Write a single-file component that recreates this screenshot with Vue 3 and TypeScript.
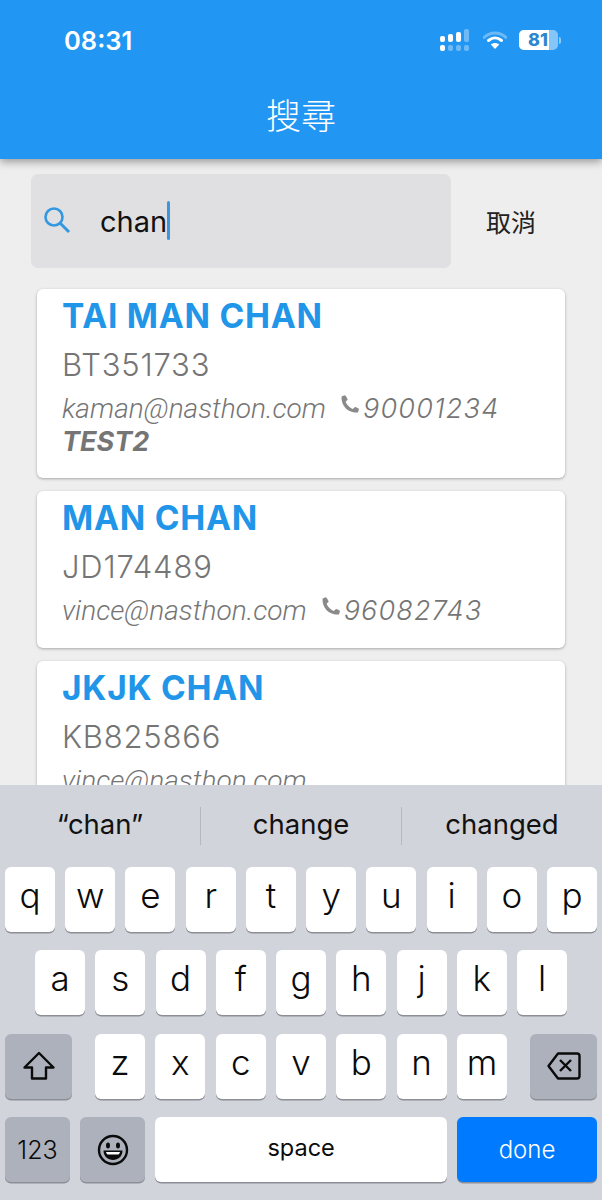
<script setup lang="ts">
interface Person { name: string; id: string; email: string; phone?: string; note?: string }
const people: Person[] = [
  { name: 'TAI MAN CHAN', id: 'BT351733', email: 'kaman@nasthon.com', phone: '90001234', note: 'TEST2' },
  { name: 'MAN CHAN', id: 'JD174489', email: 'vince@nasthon.com', phone: '96082743' },
  { name: 'JKJK CHAN', id: 'KB825866', email: 'vince@nasthon.com' }
]
const row1 = 'qwertyuiop'.split('')
const row2 = 'asdfghjkl'.split('')
const row3 = 'zxcvbnm'.split('')
</script>

<template>
  <div class="page">
    <header class="header">
      <div class="status">
        <span class="time">08:31</span>
        <div class="status-icons">
          <svg width="30" height="22" viewBox="0 0 30 22" class="signal">
            <rect x="0" y="7" width="5" height="6" rx="2" fill="#fff" />
            <rect x="8" y="5" width="5" height="8" rx="2" fill="#fff" />
            <rect x="16" y="3" width="5" height="10" rx="2" fill="#fff" />
            <rect x="24" y="0" width="5" height="13" rx="2" fill="#fff" opacity=".35" />
            <rect x="0" y="16" width="5" height="6" rx="2" fill="#fff" />
            <rect x="8" y="16" width="5" height="6" rx="2" fill="#fff" opacity=".35" />
            <rect x="16" y="16" width="5" height="6" rx="2" fill="#fff" opacity=".35" />
            <rect x="24" y="16" width="5" height="6" rx="2" fill="#fff" opacity=".35" />
          </svg>
          <svg width="24" height="20" viewBox="0 0 24 20" class="wifi">
            <path d="M1 7.5C7.5 1.5 16.5 1.5 23 7.5" fill="none" stroke="#fff" stroke-width="3" opacity=".35" stroke-linecap="round" />
            <path d="M5.5 10.5C9.500 7 14.500 7 18.500 10.500" fill="none" stroke="#fff" stroke-width="3" stroke-linecap="round" />
            <path d="M12 19L7.800 14.400C10.200 12.400 13.800 12.400 16.200 14.400Z" fill="#fff" />
          </svg>
          <div class="battery">
            <div class="battery-body"><span class="battery-fill"><b class="battery-num">81</b></span></div>
            <i class="battery-cap"></i>
          </div>
        </div>
      </div>
      <h1 class="title">搜尋</h1>
    </header>

    <main class="content">
      <div class="search-row">
        <div class="search-box">
          <svg class="search-icon" width="28" height="28" viewBox="0 0 28 28">
            <circle cx="11" cy="11" r="8.500" fill="none" stroke="#3498e0" stroke-width="2.600" />
            <path d="M17 17L26 26" stroke="#3498e0" stroke-width="3" fill="none" />
          </svg>
          <span class="query">chan</span><i class="caret"></i>
        </div>
        <span class="cancel">取消</span>
      </div>

      <div class="list">
        <article v-for="p in people" :key="p.id" class="card">
          <div class="name">{{ p.name }}</div>
          <div class="pid">{{ p.id }}</div>
          <div class="contact">
            <span class="email">{{ p.email }}</span>
            <template v-if="p.phone">
              <svg class="phone" width="20" height="20" viewBox="0 0 20 20">
                <path d="M4.600 1.200L1.600 2.600C1.200 7 2.600 11 5.600 14.200C8.600 17.200 12.600 18.600 18 18.600L19 15C19 14.600 15.800 13 15 13L12.800 15C10 14 6.600 10.600 5.600 7.800L7.600 5.800C7.800 5 6 1.600 4.600 1.200Z" fill="#8a8a8a" />
              </svg>
              <span class="tel">{{ p.phone }}</span>
            </template>
          </div>
          <div v-if="p.note" class="note">{{ p.note }}</div>
        </article>
      </div>
    </main>

    <footer class="keyboard">
      <div class="suggest">
        <span class="sg">“chan”</span><i class="sg-sep"></i>
        <span class="sg">change</span><i class="sg-sep"></i>
        <span class="sg">changed</span>
      </div>
      <div class="keys">
        <div class="kb-row">
          <span v-for="k in row1" :key="k" class="key letter">{{ k }}</span>
        </div>
        <div class="kb-row inset">
          <span v-for="k in row2" :key="k" class="key letter">{{ k }}</span>
        </div>
        <div class="kb-row">
          <span class="key fn wide">
            <svg width="34" height="30" viewBox="0 0 34 30">
              <path d="M17 2L31.500 16.500H24V27.500H10V16.500H2.500Z" fill="none" stroke="#0b0b0b" stroke-width="2.400" stroke-linejoin="round" />
            </svg>
          </span>
          <div class="mid">
            <span v-for="k in row3" :key="k" class="key letter">{{ k }}</span>
          </div>
          <span class="key fn wide">
            <svg width="34" height="30" viewBox="0 0 34 30">
              <path d="M11 2.500H30C31.400 2.500 32.500 3.600 32.500 5V25C32.500 26.400 31.400 27.500 30 27.500H11L1.500 15Z" fill="none" stroke="#0b0b0b" stroke-width="2.400" stroke-linejoin="round" />
              <path d="M13 9L24 20M24 9L13 20" fill="none" stroke="#0b0b0b" stroke-width="2.400" />
            </svg>
          </span>
        </div>
        <div class="kb-row bottom">
          <span class="key fn num">123</span>
          <span class="key fn emoji">
            <svg width="32" height="32" viewBox="0 0 32 32">
              <circle cx="16" cy="16" r="14" fill="none" stroke="#0b0b0b" stroke-width="2.400" />
              <ellipse cx="11" cy="11.500" rx="2" ry="3" fill="#0b0b0b" />
              <ellipse cx="21" cy="11.500" rx="2" ry="3" fill="#0b0b0b" />
              <path d="M6.500 16.500H25.500C25.500 22.500 21 26 16 26C11 26 6.500 22.500 6.500 16.500Z" fill="#0b0b0b" />
              <path d="M9 18H23C22.500 19.500 22 20 21.500 20.500H10.500C10 20 9.500 19.500 9 18Z" fill="#fff" />
            </svg>
          </span>
          <span class="key letter space">space</span>
          <span class="key done">done</span>
        </div>
      </div>
    </footer>
  </div>
</template>

<style>
html, body { margin: 0; padding: 0; background: #eeeeee; }
</style>

<style scoped>
.page {
  width: 602px;
  height: 1200px;
  display: flex;
  flex-direction: column;
  overflow: hidden;
  background: #eeeeee;
  font-family: Inter, "Noto Sans CJK TC", sans-serif;
}
.header {
  height: 159px;
  flex: none;
  background: #2196f3;
  box-shadow: 0 3px 8px rgba(0, 0, 0, .35);
  position: relative;
  z-index: 2;
  color: #fff;
  box-sizing: border-box;
  padding-top: 24px;
}
.status {
  height: 32px;
  display: flex;
  justify-content: space-between;
  align-items: center;
  padding: 0 41px 0 64px;
}
.time {
  font-size: 25.500px;
  font-weight: 600;
}
.status-icons { display: flex; align-items: center; gap: 11px; }
.wifi { margin-left: 2px; }
.battery { display: flex; align-items: center; gap: 1px; margin-left: 1px; }
.battery-body {
  width: 39px;
  height: 20px;
  border-radius: 5px;
  background: rgba(255, 255, 255, .45);
  overflow: hidden;
}
.battery-fill {
  display: flex;
  justify-content: flex-end;
  width: 30px;
  height: 20px;
  background: #fff;
  color: #2f86d0;
  padding-right: 1px;
  box-sizing: border-box;
}
.battery-num {
  font-size: 18px;
  font-weight: 800;
  line-height: 20px;
}
.battery-cap {
  width: 2px;
  height: 7px;
  border-radius: 0 2px 2px 0;
  background: rgba(255, 255, 255, .5);
}
.title {
  margin: 37px 0 0;
  font-size: 35px;
  font-weight: 300;
  line-height: 42px;
  text-align: center;
  font-family: "Noto Sans CJK TC", sans-serif;
}
.content {
  flex: 1;
  min-height: 0;
  overflow: hidden;
  padding-top: 15px;
}
.search-row {
  display: flex;
  align-items: center;
  padding-left: 31px;
}
.search-box {
  width: 420px;
  height: 94px;
  background: #e0e0e2;
  border-radius: 7px;
  display: flex;
  align-items: center;
  padding-left: 12px;
  box-sizing: border-box;
}
.search-icon { flex: none; margin-bottom: 2px; }
.query {
  margin-left: 29px;
  font-size: 29px;
  color: #111;
}
.caret {
  width: 3px;
  height: 39px;
  margin-bottom: 2px;
  background: #3b97dd;
  border-radius: 2px;
}
.cancel {
  margin-left: 35px;
  font-size: 25px;
  color: #222;
  font-family: "Noto Sans CJK TC", sans-serif;
}
.list {
  padding: 21px 37px 0;
  display: flex;
  flex-direction: column;
  gap: 13px;
}
.card {
  background: #fff;
  border-radius: 6px;
  box-shadow: 0 1px 3px rgba(0, 0, 0, .3);
  padding: 7px 25px 19px;
  flex: none;
}
.name {
  color: #2196e8;
  font-size: 33.500px;
  font-weight: 700;
  line-height: 40px;
  letter-spacing: .75px;
}
.pid {
  margin-top: 9px;
  color: #757575;
  font-size: 31px;
  font-weight: 300;
  line-height: 40px;
  letter-spacing: .8px;
}
.contact {
  margin-top: 6px;
  display: flex;
  align-items: center;
  color: #757575;
  font-size: 27px;
  font-style: italic;
  font-weight: 300;
  line-height: 36px;
}
.email { font-family: Roboto, sans-serif; font-size: 28.100px; }
.phone { margin-left: 14px; margin-bottom: 10px; flex: none; }
.tel { margin-left: 3px; letter-spacing: 1.200px; }
.note {
  color: #757575;
  font-size: 27px;
  font-weight: 700;
  font-style: italic;
  line-height: 30px;
  margin-bottom: 2px;
}
.keyboard {
  height: 415px;
  flex: none;
  background: #d1d4db;
  position: relative;
  z-index: 3;
  box-sizing: border-box;
}
.suggest {
  height: 82px;
  display: flex;
  align-items: center;
  font-size: 27.500px;
  color: #111;
  padding-bottom: 4px;
  box-sizing: border-box;
}
.sg { flex: 1; text-align: center; }
.sg-sep { width: 1px; height: 38px; background: #b5b8c0; margin-top: 4px; }
.keys {
  display: flex;
  flex-direction: column;
  gap: 18.400px;
  padding: 0 5px;
}
.kb-row { display: flex; gap: 10.200px; height: 65px; }
.inset { padding: 0 30px; }
.mid { flex: 1; display: flex; gap: 10.200px; margin: 0 12.800px; }
.key {
  display: flex;
  align-items: center;
  justify-content: center;
  border-radius: 6px;
  box-shadow: 0 1.500px 0 #8c8f96;
  color: #0b0b0b;
  box-sizing: border-box;
}
.letter {
  flex: 1;
  background: #fff;
  font-size: 35px;
  font-weight: 300;
  padding-bottom: 9px;
}
.fn { background: #acb1bc; }
.wide { flex: none; width: 67px; }
.num { flex: none; width: 65px; font-size: 25px; font-weight: 300; }
.emoji { flex: none; width: 65px; }
.space { flex: none; width: 291.500px; font-size: 23.500px; font-weight: 400; padding-bottom: 4px; }
.done {
  flex: 1;
  background: #007aff;
  color: #fff;
  font-size: 24px;
  font-weight: 300;
}
</style>
